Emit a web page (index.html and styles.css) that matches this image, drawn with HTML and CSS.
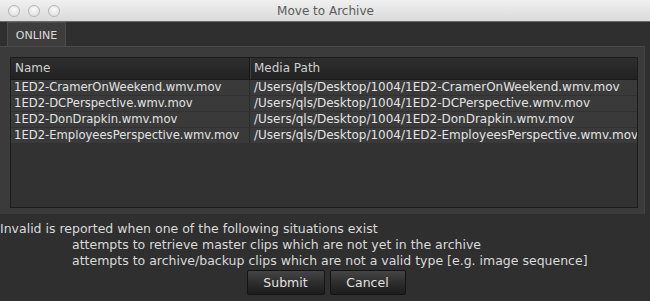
FILE: index.html
```html
<!DOCTYPE html>
<html>
<head>
<meta charset="utf-8">
<link rel="stylesheet" href="styles.css">
</head>
<body>
<div class="window">
  <div class="titlebar">
    <div class="lights">
      <span class="light"></span><span class="light"></span><span class="light"></span>
    </div>
    <div class="title">Move to Archive</div>
  </div>
  <div class="tabs">
    <div class="tab">ONLINE</div>
  </div>
  <div class="panel">
    <div class="table">
      <div class="row head">
        <div class="cell name">Name</div>
        <div class="cell path">Media Path</div>
      </div>
      <div class="row">
        <div class="cell name">1ED2-CramerOnWeekend.wmv.mov</div>
        <div class="cell path">/Users/qls/Desktop/1004/1ED2-CramerOnWeekend.wmv.mov</div>
      </div>
      <div class="row">
        <div class="cell name">1ED2-DCPerspective.wmv.mov</div>
        <div class="cell path">/Users/qls/Desktop/1004/1ED2-DCPerspective.wmv.mov</div>
      </div>
      <div class="row">
        <div class="cell name">1ED2-DonDrapkin.wmv.mov</div>
        <div class="cell path">/Users/qls/Desktop/1004/1ED2-DonDrapkin.wmv.mov</div>
      </div>
      <div class="row">
        <div class="cell name">1ED2-EmployeesPerspective.wmv.mov</div>
        <div class="cell path">/Users/qls/Desktop/1004/1ED2-EmployeesPerspective.wmv.mov</div>
      </div>
    </div>
  </div>
  <div class="notes">
    <p>Invalid is reported when one of the following situations exist</p>
    <p class="indent">attempts to retrieve master clips which are not yet in the archive</p>
    <p class="indent">attempts to archive/backup clips which are not a valid type [e.g. image sequence]</p>
  </div>
  <div class="buttons">
    <button class="btn submit">Submit</button>
    <button class="btn cancel">Cancel</button>
  </div>
</div>
</body>
</html>
```

FILE: styles.css
```css
* { box-sizing: border-box; }
html, body {
  margin: 0;
  padding: 0;
  width: 650px;
  height: 301px;
  overflow: hidden;
  background: #2f2f2f;
  font-family: "DejaVu Sans", "Liberation Sans", sans-serif;
}
.window {
  display: flex;
  flex-direction: column;
  height: 301px;
}
.titlebar {
  height: 22px;
  background: linear-gradient(#f0f0f0, #dadada);
  border-bottom: 1px solid #6a6a6a;
  position: relative;
  display: flex;
  align-items: center;
  justify-content: center;
}
.lights {
  position: absolute;
  left: 8px;
  top: 5px;
  display: flex;
  gap: 8px;
}
.light {
  width: 12px;
  height: 12px;
  border-radius: 50%;
  border: 1px solid #b4b4b4;
  background: radial-gradient(circle at 50% 35%, #fafafa, #dcdcdc);
}
.title {
  font-size: 12px;
  color: #5a5a5a;
  padding-left: 1px;
}
.tabs {
  height: 24px;
  padding-left: 7px;
  display: flex;
  align-items: flex-end;
  background: #2f2f2f;
}
.tab {
  width: 59px;
  height: 24px;
  background: #3d3d3d;
  border: 1px solid #4c4c4c;
  border-bottom: none;
  color: #dcdcdc;
  font-size: 11px;
  display: flex;
  align-items: center;
  justify-content: center;
  padding-top: 1px;
}
.panel {
  height: 168px;
  margin-right: 5px;
  background: #3b3b3b;
  border-top: 1px solid #4a4a4a;
  border-right: 1px solid #454545;
  padding: 10px 6px 6px 10px;
}
.table {
  height: 100%;
  background: #323232;
  border: 1px solid #1c1c1c;
  display: flex;
  flex-direction: column;
}
.row {
  display: flex;
  height: 16px;
  background: #3a3a3a;
  border-bottom: 1px solid #313131;
  color: #e2e2e2;
  font-size: 12px;
  line-height: 15px;
}
.row.head {
  height: 22px;
  background: linear-gradient(#2e2e2e, #222222);
  border-bottom: 1px solid #1a1a1a;
  color: #cfcfcf;
  line-height: 21px;
}
.cell {
  white-space: nowrap;
  overflow: hidden;
}
.name {
  width: 239px;
  padding-left: 3px;
  border-right: 1px solid #2c2c2c;
  font-size: 11.6px;
}
.head .name {
  padding-left: 4px;
  border-right: 1px solid #151515;
  box-shadow: 1px 0 0 #3e3e3e;
  font-size: 12px;
}
.path {
  flex: 1;
  padding-left: 4px;
}
.notes {
  margin-top: 7px;
  font-size: 12.5px;
  color: #dadada;
  line-height: 16px;
}
.notes p {
  margin: 0;
}
.notes .indent {
  padding-left: 72px;
}
.buttons {
  display: flex;
  justify-content: center;
  gap: 5px;
  margin-top: 1px;
  padding-left: 2px;
}
.btn {
  height: 25px;
  border: 1px solid #141414;
  border-radius: 2px;
  background: linear-gradient(#454545, #2a2a2a 60%, #1c1c1c);
  color: #e0e0e0;
  font-family: "DejaVu Sans", "Liberation Sans", sans-serif;
  font-size: 12.5px;
  padding: 0;
}
.submit { width: 78px; }
.cancel { width: 76px; }
```
